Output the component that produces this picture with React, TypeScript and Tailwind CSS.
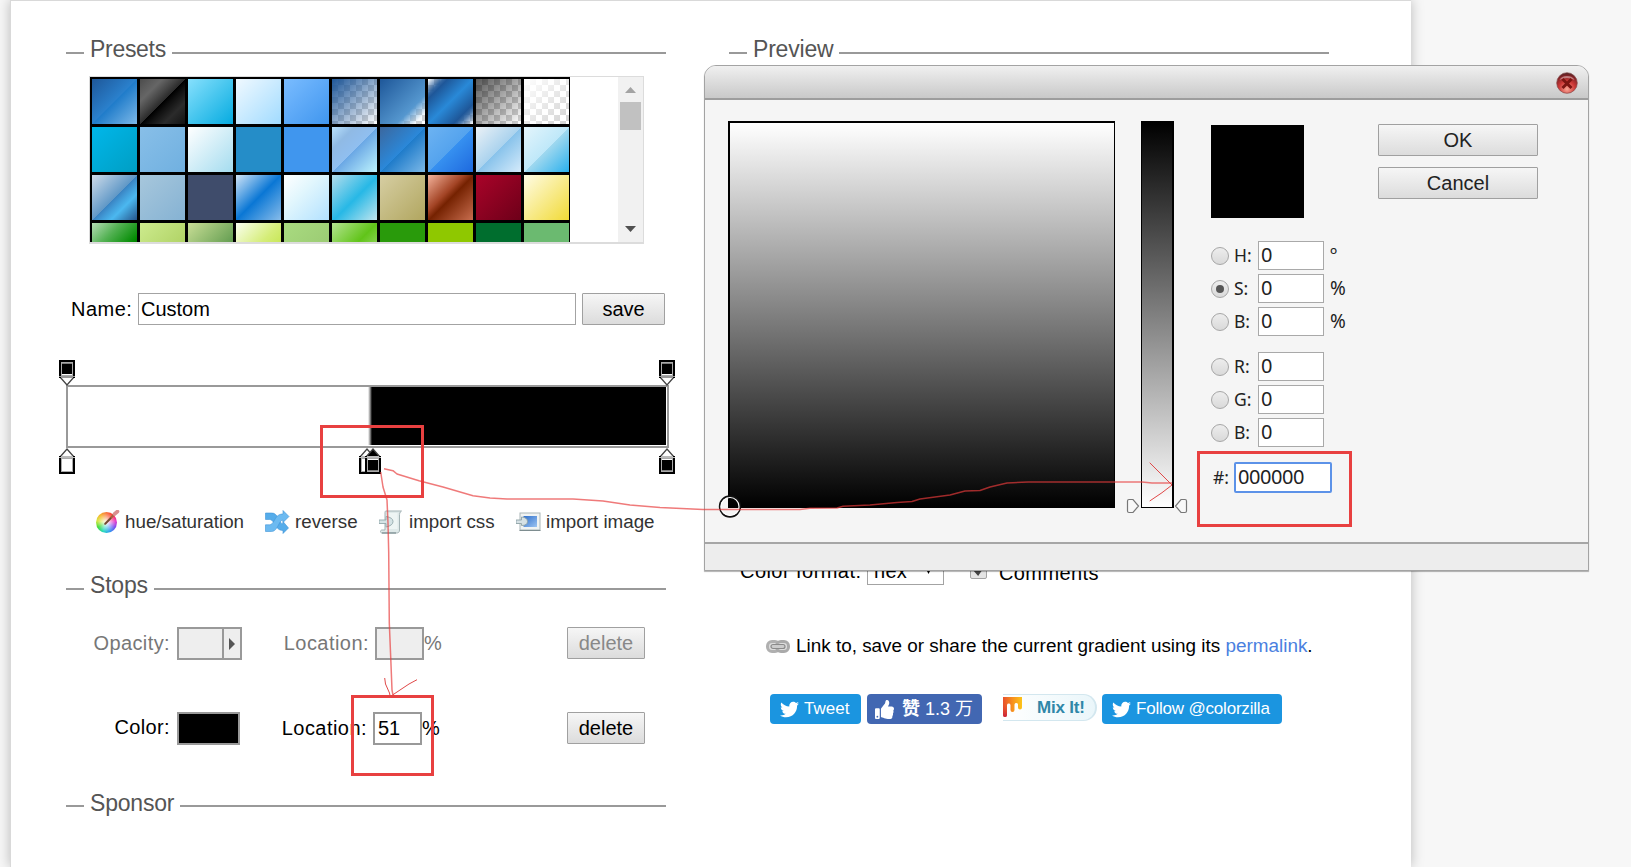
import React from "react";
import { FaThumbsUp, FaTwitter } from "react-icons/fa";

const checker =
  "repeating-conic-gradient(#d2d2d2 0% 25%, #fff 0% 50%) 0 0 / 12px 12px";

const presets: string[] = [
  "linear-gradient(135deg,#1e5799 0%,#2a80cc 49%,#207cca 51%,#7db9e8 100%)",
  "linear-gradient(135deg,#4c4c4c 0%,#595959 12%,#666 25%,#474747 39%,#2c2c2c 50%,#000 51%,#111 60%,#2b2b2b 76%,#1c1c1c 91%,#131313 100%)",
  "linear-gradient(135deg,#87e0fd 0%,#53cbf1 40%,#05abe0 100%)",
  "linear-gradient(135deg,#f0f9ff 0%,#cbebff 47%,#a1dbff 100%)",
  "linear-gradient(135deg,#7abcff 0%,#60abf8 44%,#4096ee 100%)",
  "linear-gradient(135deg,#1e5799 0%,rgba(125,185,232,0) 100%)," + checker,
  "linear-gradient(135deg,#1e5799 0%,#5597cf 68%,rgba(125,185,232,0.1) 88%,rgba(125,185,232,0) 100%)," + checker,
  "linear-gradient(135deg,rgba(30,87,153,0) 0%,rgba(30,87,153,0.9) 17%,#1e5799 22%,#2989d8 50%,#1e5799 78%,rgba(30,87,153,0.8) 85%,rgba(125,185,232,0) 100%)," + checker,
  "linear-gradient(135deg,rgba(0,0,0,0.65) 0%,rgba(0,0,0,0) 100%)," + checker,
  "linear-gradient(135deg,rgba(255,255,255,1) 0%,rgba(255,255,255,0) 100%)," + checker,
  "linear-gradient(135deg,#00b7ea 0%,#009ec3 100%)",
  "linear-gradient(135deg,#88bfe8 0%,#70b0e0 100%)",
  "linear-gradient(135deg,#fff 0%,#a4dcef 100%)",
  "#258dc8",
  "#4096ee",
  "linear-gradient(135deg,#b8e1fc 0%,#a9d2f3 10%,#90bae4 25%,#90bcea 37%,#90bff0 50%,#6ba8e5 51%,#a2daf5 83%,#bdf3fd 100%)",
  "linear-gradient(135deg,#3b679e 0%,#2b88d9 50%,#207cca 51%,#7db9e8 100%)",
  "linear-gradient(135deg,#6db3f2 0%,#54a3ee 50%,#3690f0 51%,#1e69de 100%)",
  "linear-gradient(135deg,#ebf1f6 0%,#abd3ee 50%,#89c3eb 51%,#d5ebfb 100%)",
  "linear-gradient(135deg,#e4f5fc 0%,#bfe8f9 50%,#9fd8ef 51%,#2ab0ed 100%)",
  "linear-gradient(135deg,#cedbe9 0%,#aac5de 17%,#6199c7 50%,#3a84c3 51%,#419ad6 59%,#4bb8f0 71%,#3a8bc2 84%,#26558b 100%)",
  "linear-gradient(135deg,#a7c7dc 0%,#85b2d3 100%)",
  "#3f4c6b",
  "linear-gradient(135deg,#d0e4f7 0%,#73b1e7 24%,#0a77d5 50%,#539fe1 79%,#87bcea 100%)",
  "linear-gradient(135deg,#fff 0%,#e1f6fd 40%,#b2e1ff 100%)",
  "linear-gradient(135deg,#b4ddec 0%,#27b8e6 52%,#c0e5ee 100%)",
  "linear-gradient(135deg,#d6cea3 0%,#b1a65f 100%)",
  "linear-gradient(135deg,#f3b29b 0%,#a34425 40%,#752201 51%,#c86d4e 100%)",
  "linear-gradient(135deg,#a90329 0%,#8f0222 44%,#6d0019 100%)",
  "linear-gradient(135deg,#fffce5 0%,#f1da36 100%)",
  "linear-gradient(135deg,#b4ddb4 0%,#83c783 17%,#52b152 33%,#008a00 67%,#005700 83%,#002400 100%)",
  "linear-gradient(135deg,#cdeb8e 0%,#a5c956 100%)",
  "linear-gradient(135deg,#c9de96 0%,#8ab66b 44%,#398235 100%)",
  "linear-gradient(135deg,#fafff0 0%,#d5ed78 50%,#b6df2d 100%)",
  "linear-gradient(135deg,#a9db80 0%,#96c56f 100%)",
  "linear-gradient(135deg,#b4e391 0%,#61c419 50%,#b4e391 100%)",
  "#299a0b",
  "#8fc800",
  "#006e2e",
  "#6bba70",
];

function SectionHeading({ title, titleClass }: { title: string; titleClass: string }) {
  return (
    <div className="flex h-[38px] w-[600px] items-center text-[23px] text-[#555]">
      <span className="h-[2px] w-[18px] shrink-0 bg-[#999]" />
      <h2 className={`ml-[5px] h-[38px] shrink-0 whitespace-nowrap ${titleClass}`}>{title}</h2>
      <span className="h-[2px] flex-1 bg-[#999]" />
    </div>
  );
}

function Button({ label, className }: { label: string; className: string }) {
  return (
    <button
      className={`h-[32px] shrink-0 rounded-[1px] border border-[#a0a0a0] bg-[linear-gradient(#f6f6f6,#dcdcdc)] text-center text-[20px] leading-[29px] ${className}`}
    >
      {label}
    </button>
  );
}

function Marker({ fill, tip = "#fff", up = false, className = "" }: { fill: string; tip?: string; up?: boolean; className?: string }) {
  return (
    <svg width="16" height="26" viewBox="0 0 16 26" className={`relative shrink-0 ${className}`}>
      <g transform={up ? "matrix(1 0 0 -1 0 26)" : undefined}>
        <path d="M1 17 L8 25 L15 17" fill={tip} stroke="#444" strokeWidth="1.3" />
        <rect x="1" y="1" width="14" height="16" fill="#fff" stroke="#000" strokeWidth="2" />
        <rect x="0" y="16" width="16" height="2" fill={up ? "#bbb" : "#999"} />
        <path d="M1 17v1M15 17v1" stroke="#000" strokeWidth="2" />
        <rect x="2.5" y="2.5" width="11" height="13" fill="none" stroke="#aaa" />
        <rect x="3" y="3.500" width="10" height="10.500" fill={fill} />
      </g>
    </svg>
  );
}

function HueIcon() {
  return (
    <span className="relative block size-[24px] shrink-0">
      <span className="absolute top-[2px] left-0 block size-[21px] rounded-full bg-[radial-gradient(circle,#fff_0%,rgba(255,255,255,0.7)_20%,rgba(255,255,255,0)_65%),conic-gradient(from_0deg,#f7763c,#f33,#e935c8,#7a4bf0,#2c9cf0,#26d8c0,#3fdc3c,#d4e63a,#f8b52d,#f7763c)]" />
      <svg viewBox="0 0 24 24" className="absolute inset-0">
        <path d="M9 14 L19 3.5" stroke="#a7613e" strokeWidth="2.2" />
        <path d="M8.5 14.5 L15 8" stroke="#6b4a38" strokeWidth="1.4" />
        <path d="M18.5 4 L21.5 1.5" stroke="#d98f8f" strokeWidth="3.6" strokeLinecap="round" />
      </svg>
    </span>
  );
}

function ReverseIcon() {
  return (
    <svg width="25" height="24" viewBox="0 0 25 24" className="shrink-0">
      <g fill="#55acea" stroke="#3f93d6" strokeWidth=".6">
        <path d="M.5 3H6.500c3.500 0 5 2 7 5.500C15 11.500 16 13.800 18 13.800V11.500l5.500 6.500L18 23.500v-3c-4.500 0-6.500-3-8.500-6.500C8 11 6.500 9.500 4.500 9.500H.5z" />
        <path d="M.5 21.500H6.500c3.500 0 5-3 7-6.500C15 12 16 10.200 18 10.200V12.500L24 6.500 18 .5v3.500c-4.500 0-6.500 2.500-8.500 6C8 13 6.500 14.800 4.500 14.800H.5z" fill="#6cbaf1" />
      </g>
    </svg>
  );
}

function CssIcon() {
  return (
    <svg width="24" height="24" viewBox="0 0 24 24" className="shrink-0">
      <path d="M7 1h15.500c-2 1-2 3-2 5v14c0 2-1 3-3 3H3c-2 0-2-3 0-3h3V3c0-1 0-2 1-2z" fill="#dfe9e9" stroke="#a3b3b5" />
      <path d="M9 3h9.500v16H9z" fill="#eef5f4" />
      <path d="M3 23h14" stroke="#6f8386" />
      <path d="M0 10h7V6.500q7 1 7 5T7 17v-3.500H0z" fill="#d5e3e5" stroke="#93a8ab" strokeWidth=".9" />
    </svg>
  );
}

function ImageIcon() {
  return (
    <svg width="25" height="20" viewBox="0 0 25 20" className="shrink-0">
      <defs>
        <linearGradient id="photo" x1="0" y1="0" x2="1" y2="1">
          <stop offset="0" stopColor="#2f6fcb" />
          <stop offset="1" stopColor="#9cc4f2" />
        </linearGradient>
      </defs>
      <rect x="4" y="1" width="20" height="17" fill="#f0f3f3" stroke="#aab6b8" />
      <rect x="7.500" y="4" width="13.500" height="11" fill="url(#photo)" />
      <path d="M3.500 18.500h21" stroke="#7e8d90" />
      <path d="M0 8h5.500V5q6 .5 6 4.500t-6 4V11.500H0z" fill="#d6e1e5" stroke="#8ea3a6" strokeWidth=".9" />
    </svg>
  );
}

function LinkIcon() {
  return (
    <svg width="24" height="13" viewBox="0 0 24 13" className="shrink-0">
      <rect x="1.500" y="1.500" width="12" height="10" rx="4.500" fill="#ddd" stroke="#b0b0b0" strokeWidth="3" />
      <rect x="10.500" y="1.500" width="12" height="10" rx="4.500" fill="#ddd" stroke="#aaa" strokeWidth="3" />
      <rect x="5" y="4.500" width="14" height="4" rx="2" fill="#ccc" stroke="#8a8a8a" strokeWidth="1.200" />
    </svg>
  );
}

function MixIcon() {
  return (
    <svg width="19" height="21" viewBox="0 0 19 21" className="shrink-0">
      <defs>
        <linearGradient id="mix" x1="0" y1="0" x2="1" y2="0">
          <stop offset="0" stopColor="#e8502c" />
          <stop offset=".5" stopColor="#f7901e" />
          <stop offset="1" stopColor="#fcc419" />
        </linearGradient>
        <linearGradient id="drip" x1="0" y1="0" x2="0" y2="1">
          <stop offset="0" stopColor="#f05a28" stopOpacity="0" />
          <stop offset="1" stopColor="#c81e3c" />
        </linearGradient>
      </defs>
      <path d="M0 0H19V10.500a2 2 0 0 1-4 0V7.500a1.800 1.800 0 0 0-3.500 0V13a2 2 0 0 1-4 0V8a1.800 1.800 0 0 0-3.500 0V18a2 2 0 0 1-4 0z" fill="url(#mix)" />
      <path d="M0 4H4v14a2 2 0 0 1-4 0z" fill="url(#drip)" />
    </svg>
  );
}

function ChannelRow({ label, unit = "", checked = false, className = "" }: { label: string; unit?: string; checked?: boolean; className?: string }) {
  return (
    <div className={`flex h-[29px] items-center ${className}`}>
      <span className="flex size-[18px] items-center justify-center rounded-full border border-[#a6a6a6] bg-[linear-gradient(#ededed,#d9d9d9)]">
        {checked && <span className="size-[8px] rounded-full bg-[#555]" />}
      </span>
      <span className="ml-[5px] w-[24px] text-[17.5px] leading-[29px]">{label}</span>
      <span className="h-[29px] w-[66px] border border-[#a9a9a9] bg-white pl-[2px] text-[20px] leading-[25px]">0</span>
      <span className="ml-[6px] text-[19px] leading-[29px]">{unit}</span>
    </div>
  );
}

function ColorDialog() {
  return (
    <div className="absolute top-[65px] left-[704px] flex h-[506px] w-[885px] flex-col overflow-hidden rounded-t-[12px] border border-[#a3a3a3] bg-[#f5f5f5] shadow-[0_1px_1px_rgba(0,0,0,0.3)]">
      <div className="flex h-[34px] shrink-0 items-center justify-end border-b-2 border-[#9d9d9d] bg-[linear-gradient(#f0f0f0,#e2e2e2_35%,#c9c9c9)] pt-[2px] pr-[10px]">
        <svg width="22" height="22" viewBox="0 0 22 22">
          <defs>
            <radialGradient id="close" cx=".5" cy=".8" r=".85">
              <stop offset="0" stopColor="#f9a595" />
              <stop offset=".45" stopColor="#cf3a38" />
              <stop offset=".8" stopColor="#7d2226" />
              <stop offset="1" stopColor="#2c2c2c" />
            </radialGradient>
          </defs>
          <circle cx="11" cy="11" r="10.300" fill="url(#close)" stroke="#8a4a4a" strokeWidth=".7" />
          <path d="M3.500 8a8 6 0 0 1 15 0a12 9 0 0 0-15 0" fill="#fff" opacity=".4" />
          <path d="M6.500 7L15.500 16M15.500 7L6.500 16" stroke="#7d1512" strokeWidth="3" />
        </svg>
      </div>
      <div className="flex flex-1 pt-[21px] pl-[23px]">
        <div className="h-[387px] w-[387px] shrink-0 border-t-2 border-r border-b border-l-2 border-black bg-[linear-gradient(#fff,#000)]" />
        <div className="ml-[26px] h-[387px] w-[33px] shrink-0 border-t border-r-2 border-b border-l border-black bg-[linear-gradient(#000,#fff)]" />
        <div className="ml-[37px] w-[167px] shrink-0 pt-[4px] font-['Noto_Sans','Open_Sans',sans-serif] text-[#222]">
          <div className="h-[93px] w-[93px] bg-black" />
          <ChannelRow label="H:" unit="º" className="mt-[23px]" />
          <ChannelRow label="S:" unit="%" checked className="mt-[4px]" />
          <ChannelRow label="B:" unit="%" className="mt-[4px]" />
          <ChannelRow label="R:" className="mt-[16px]" />
          <ChannelRow label="G:" className="mt-[4px]" />
          <ChannelRow label="B:" className="mt-[4px]" />
          <div className="mt-[15px] flex h-[31px] items-center">
            <span className="w-[23px] pl-[2px] text-[17.5px]">#:</span>
            <span className="h-[31px] w-[98px] rounded-[2px] border-2 border-[#5c92e8] bg-white pl-[2px] text-[20px] leading-[25px] tracking-[-0.45px]">000000</span>
          </div>
        </div>
        <div className="flex flex-col gap-[11px] pt-[3px]">
          <Button label="OK" className="w-[160px] text-[#222]" />
          <Button label="Cancel" className="w-[160px] text-[#222]" />
        </div>
      </div>
      <div className="h-[28px] shrink-0 border-t-2 border-[#a6a6a6] bg-[#ededed]" />
    </div>
  );
}

function Annotations() {
  return (
    <svg className="absolute inset-0" width="1631" height="867" viewBox="0 0 1631 867" fill="none">
      <circle cx="730" cy="506.500" r="10.300" stroke="#111" strokeWidth="1.800" />
      <circle cx="730" cy="506.500" r="9" stroke="#fff" strokeWidth="1.200" />
      <g fill="#f8f8f8" stroke="#777" strokeWidth="1.200">
        <path d="M1129 499.500h4l5.500 6.500-5.500 6.500h-4q-1.500 0-1.500-1.500v-10q0-1.500 1.500-1.500z" />
        <path d="M1185 499.500h-4l-5.500 6.500 5.500 6.500h4q1.500 0 1.500-1.500v-10q0-1.500-1.500-1.500z" />
      </g>
      <g stroke="#e84040" strokeWidth="3">
        <rect x="321.500" y="426.500" width="101" height="70" />
        <rect x="352.500" y="696.500" width="80" height="78" />
        <rect x="1198.500" y="452.500" width="152" height="73" />
      </g>
      <g stroke="#e83b3b" strokeOpacity=".68" strokeWidth="1.500" strokeLinejoin="round">
        <path d="M384 468.700L393 470.700L397 474L419 480.700L443 487L473 495.700L490 498L507 499H573L603 501L630 505L660 507.500L703 509.500H800L810 508.300L837 508L843 506.300L870 505L897 502.500L912 501.500L920 499L950 495L965 491L980 490.500L990 487L1007 483L1028 482H1142L1152 483H1172" />
        <path d="M380.700 472L383 487L387 500L388 523L388.700 552L389.300 623L390.700 657L392 690L393 695" />
      </g>
      <g stroke="#e04848" strokeWidth="1" strokeLinejoin="round">
        <path d="M1149.700 462.700L1160 473L1172 485L1162 492.700L1149.700 501" />
        <path d="M384.700 678L385.500 684L389.500 693L390.500 698" />
        <path d="M392.500 695L409 684L417 679.700" />
      </g>
    </svg>
  );
}

export default function App() {
  return (
    <div className="relative h-[867px] w-[1631px] overflow-hidden bg-[#f7f7f7] pl-[10px] font-['Liberation_Sans',Arial,sans-serif] text-black">
      <main className="flex h-[867px] w-[1401px] border-t border-l border-[#d9d9d9] bg-white pt-[33px] pl-[55px] shadow-[0_0_12px_rgba(0,0,0,0.25)]">
        <section className="w-[600px] shrink-0">
          <SectionHeading title="Presets" titleClass="w-[83px] pl-[1px] leading-[30px] tracking-[-0.3px]" />
          <div className="mt-[4px] ml-[23px] flex h-[168px] w-[555px] justify-between overflow-hidden border border-b-2 border-[#dcdcdc]">
            <div className="grid h-[191px] w-[480px] shrink-0 grid-cols-[repeat(10,45px)] grid-rows-[repeat(4,45px)] gap-[3px] bg-black pt-[2px] pl-[2px]">
              {presets.map((background, i) => (
                <span key={i} className="h-[45px] w-[45px]" style={{ background }} />
              ))}
            </div>
            <div className="flex h-[165px] w-[25px] flex-col items-center bg-[#f1f1f1]">
              <svg width="11" height="6" className="mt-[10px] shrink-0"><path d="M0 6L5.500 0L11 6z" fill="#a3a3a3" /></svg>
              <span className="mt-[9px] h-[28px] w-[21px] shrink-0 bg-[#c1c1c1]" />
              <svg width="11" height="6" className="mt-[96px] shrink-0"><path d="M0 0L5.500 6L11 0z" fill="#505050" /></svg>
            </div>
          </div>

          <div className="mt-[49px] flex h-[32px] pl-[5px] text-[20px] leading-[32px]">
            <span className="w-[67px] tracking-[0.5px]">Name:</span>
            <span className="w-[438px] border border-[#a3a3a3] pl-[2px] leading-[30px]">Custom</span>
            <Button label="save" className="ml-[6px] w-[83px]" />
          </div>

          <div className="mt-[35px] -ml-[7px] flex h-[25px] w-[616px] justify-between">
            <Marker fill="#000" />
            <Marker fill="#000" />
          </div>
          <div className="h-[63px] w-[603px] border-2 border-[#999] pr-px pb-px">
            <div className="h-full w-full bg-[linear-gradient(to_right,#fff_300px,#999_302px,#000_304px)]" />
          </div>
          <div className="-ml-[7px] flex h-[26px] w-[616px]">
            <Marker up fill="#fff" />
            <Marker up fill="#fff" className="ml-[284px]" />
            <Marker up fill="#000" tip="#000" className="-ml-[10px]" />
            <Marker up fill="#000" className="ml-[278px]" />
          </div>

          <div className="mt-[27px] flex h-[42px] items-center whitespace-nowrap pl-[30px] text-[18.8px] text-[#333]">
            <HueIcon />
            <span className="ml-[5px] w-[140px]">hue/saturation</span>
            <ReverseIcon />
            <span className="ml-[5px] w-[84px]">reverse</span>
            <CssIcon />
            <span className="ml-[6px] w-[107px]">import css</span>
            <ImageIcon />
            <span className="ml-[5px]">import image</span>
          </div>

          <div className="mt-[27px]">
            <SectionHeading title="Stops" titleClass="w-[65px] pl-[1px] leading-[30px] tracking-[-0.2px]" />
          </div>
          <div className="mt-[19px] flex h-[33px] text-[20px] leading-[33px] text-[#777]">
            <span className="w-[111px] pr-[7px] text-right leading-[32px] tracking-[0.4px]">Opacity:</span>
            <span className="flex w-[65px] border-2 border-[#999] bg-[#eee]">
              <span className="w-[43px]" />
              <span className="flex w-[18px] items-center justify-center border-l-2 border-[#999]">
                <svg width="6" height="12"><path d="M0 0L6 6L0 12z" fill="#555" /></svg>
              </span>
            </span>
            <span className="w-[133px] pr-[6px] text-right tracking-[0.45px]">Location:</span>
            <span className="w-[49px] border-2 border-[#999] bg-[#eee]" />
            <span className="w-[143px]">%</span>
            <Button label="delete" className="w-[78px] text-[#888]" />
          </div>
          <div className="mt-[52px] flex h-[33px] text-[20px] leading-[33px]">
            <span className="w-[111px] pr-[7px] text-right leading-[31px] tracking-[0.35px]">Color:</span>
            <span className="w-[63px] border-2 border-[#999] bg-black" />
            <span className="w-[133px] pr-[6px] text-right tracking-[0.45px]">Location:</span>
            <span className="w-[49px] border-2 border-[#999] pl-[3px] leading-[29px]">51</span>
            <span className="w-[145px]">%</span>
            <Button label="delete" className="w-[78px]" />
          </div>
          <div className="mt-[42px]">
            <SectionHeading title="Sponsor" titleClass="w-[91px] pl-[1px] leading-[32px] tracking-[-0.2px]" />
          </div>
        </section>

        <section className="ml-[63px] w-[600px] shrink-0">
          <SectionHeading title="Preview" titleClass="w-[87px] pl-[1px] leading-[30px] tracking-[-0.2px]" />
          <div className="mt-[481px] flex h-[32px] pl-[11px] text-[20px] leading-[36px]">
            <span className="w-[127px] tracking-[0.45px]">Color format:</span>
            <span className="flex w-[77px] items-center justify-between border border-[#a3a3a3] pt-[3px] pr-[11px] pl-[6px] tracking-[0.3px]">
              hex
              <svg width="7" height="7"><path d="M0 0H7L3.500 7z" fill="#000" /></svg>
            </span>
            <span className="mt-[9px] ml-[26px] flex size-[17px] items-center justify-center rounded-[2px] border border-[#a3a3a3] bg-[#e4e4e4]">
              <svg width="11" height="11" fill="none"><path d="M1.500 4.500L5 8.500L9.500 2" stroke="#444" strokeWidth="3" /></svg>
            </span>
            <span className="ml-[12px] leading-[40px] tracking-[0.4px]">Comments</span>
          </div>
          <div className="mt-[46px] flex h-[30px] items-center whitespace-nowrap pl-[37px] text-[18.9px]">
            <LinkIcon />
            <p className="ml-[6px]">
              Link to, save or share the current gradient using its <a className="text-[#4a80e0]">permalink</a>.
            </p>
          </div>
          <div className="mt-[33px] flex h-[30px] whitespace-nowrap pl-[41px] text-[17px] leading-[30px] text-white">
            <a className="flex h-[30px] w-[91px] items-center rounded-[4px] bg-[#1b95e0] pl-[10px]">
              <FaTwitter size={19} />
              <span className="ml-[5px]">Tweet</span>
            </a>
            <a className="ml-[6px] flex h-[30px] w-[115px] items-center rounded-[4px] bg-[#4267b2] pl-[8px]">
              <FaThumbsUp size={19} />
              <span className="ml-[8px] font-['Liberation_Sans','Noto_Sans_CJK_SC',sans-serif] text-[18px]">
                <b>赞</b> 1.3 万
              </span>
            </a>
            <a className="ml-[21px] flex h-[27px] w-[94px] items-center rounded-r-full border-y border-r-2 border-[#d3e7ef] bg-[linear-gradient(to_right,#fff,#eaf6fa)] font-bold leading-[26px] text-[#2f87a8]">
              <MixIcon />
              <span className="ml-[15px] tracking-[-0.2px]">Mix It!</span>
            </a>
            <a className="ml-[5px] flex h-[30px] w-[180px] items-center rounded-[4px] bg-[#1b95e0] pl-[10px]">
              <FaTwitter size={19} />
              <span className="ml-[5px] tracking-[-0.2px]">Follow @colorzilla</span>
            </a>
          </div>
        </section>
      </main>
      <ColorDialog />
      <Annotations />
    </div>
  );
}
